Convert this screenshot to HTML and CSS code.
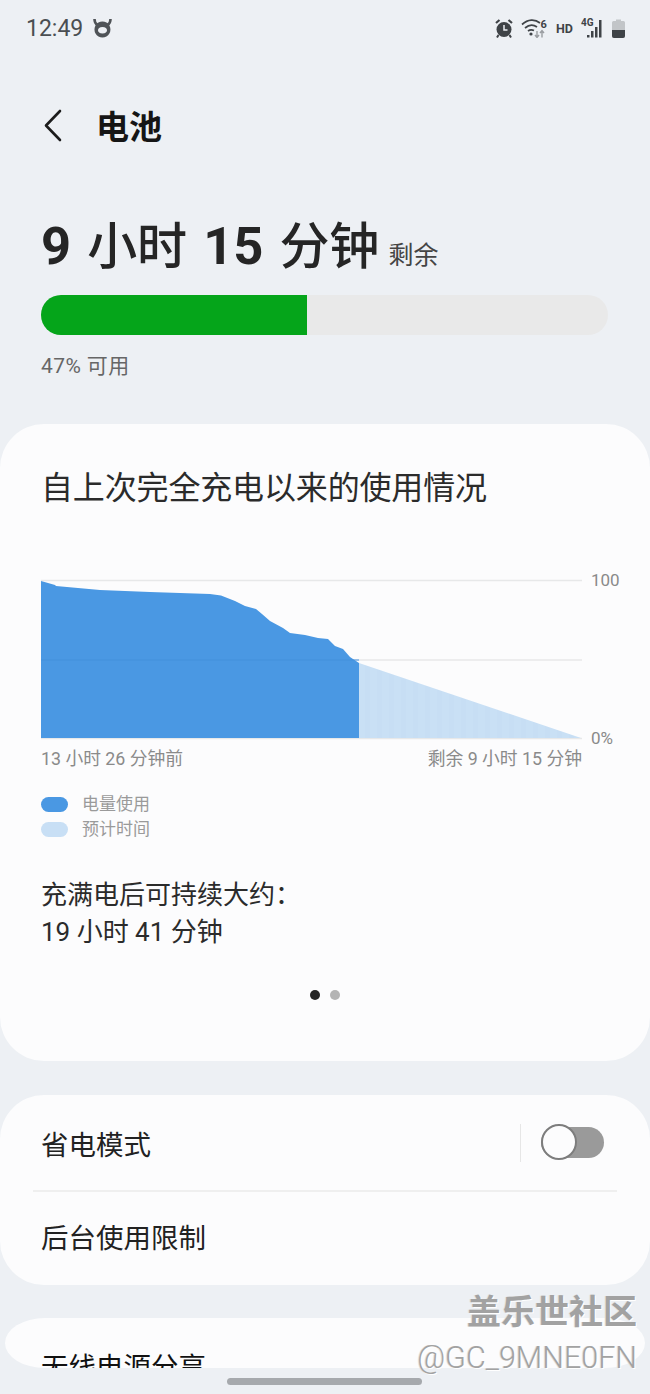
FILE: index.html
```html
<!DOCTYPE html>
<html lang="zh-CN">
<head>
    <meta charset="UTF-8">
    <meta name="viewport" content="width=device-width, initial-scale=1.0">
    <title>电池</title>
    <link rel="stylesheet" href="styles.css">
</head>
<body>
    <div class="screen">
        <div class="status">
            <span class="time">12:49</span>
            <svg class="cow" width="19" height="20" viewBox="0 0 19 20">
                <path fill-rule="evenodd" d="M9.5 3.5 A8 8 0 1 1 9.4 3.5 Z M9.5 9 C6.5 9 5 10.5 5 12.2 C5 14 6.5 15.5 9.5 15.5 C12.5 15.5 14 14 14 12.2 C14 10.5 12.5 9 9.5 9 Z" fill="#4f5357"/>
                <path d="M1.5 1 C1.5 4 2.5 6 4.5 7 M17.5 1 C17.5 4 16.5 6 14.5 7" stroke="#4f5357" stroke-width="2.6" fill="none"/>
            </svg>
            <div class="status_right">
                <svg width="18" height="19" viewBox="0 0 18 19">
                    <circle cx="9" cy="10.5" r="7.5" fill="#3f4347"/>
                    <path d="M9 6 V11 H12.5" stroke="#edf0f4" stroke-width="1.5" fill="none"/>
                    <path d="M1 4 L4.5 1 M17 4 L13.5 1" stroke="#3f4347" stroke-width="2.2"/>
                    <path d="M3.5 16 L2 18.5 M14.5 16 L16 18.5" stroke="#3f4347" stroke-width="2"/>
                </svg>
                <svg width="27" height="20" viewBox="0 0 27 20">
                    <path d="M1 6.5 C7 1 14 1 19 5 M4 10 C8 6.5 12.5 6.5 16 9 M7 13 C9 11.5 11 11.5 13 12.5" stroke="#3f4347" stroke-width="1.7" fill="none"/>
                    <circle cx="10" cy="16" r="1.6" fill="#3f4347"/>
                    <path d="M16 13 V19 M14 17 L16 19.5 L18 17" stroke="#9a9da1" stroke-width="1.4" fill="none"/>
                    <path d="M21 19.5 V13 M19 15 L21 12.5 L23 15" stroke="#9a9da1" stroke-width="1.4" fill="none"/>
                    <text x="19.5" y="9.5" class="wifi_six">6</text>
                </svg>
                <span class="hd">HD</span>
                <div class="signal">
                    <span class="four_g">4G</span>
                    <svg width="23" height="20" viewBox="0 0 23 20">
                        <rect x="6" y="17" width="2.5" height="2.5" fill="#3f4347"/>
                        <rect x="10" y="13" width="2.5" height="6.5" fill="#3f4347"/>
                        <rect x="14" y="9" width="2.5" height="10.5" fill="#3f4347"/>
                        <rect x="18" y="2" width="2.5" height="17.5" fill="#3f4347"/>
                    </svg>
                </div>
                <svg width="13" height="19" viewBox="0 0 13 19">
                    <path d="M4 0.5 H9 V2 H11.5 Q13 2 13 3.5 V17 Q13 19 11 19 H2 Q0 19 0 17 V3.5 Q0 2 1.5 2 H4 Z" fill="#c2c5c8"/>
                    <path d="M0 11 H13 V17 Q13 19 11 19 H2 Q0 19 0 17 Z" fill="#3f4347"/>
                </svg>
            </div>
        </div>

        <div class="header">
            <svg class="back" width="20" height="33" viewBox="0 0 20 33">
                <path d="M17 2 L3 16.5 L17 31" stroke="#1c1c1c" stroke-width="2.6" fill="none" stroke-linecap="round" stroke-linejoin="round"/>
            </svg>
            <h1>电池</h1>
        </div>

        <div class="summary">
            <div class="remain">
                <b>9</b> 小时 <b>15</b> 分钟<small>剩余</small>
            </div>
            <div class="level"><div class="level_fill" style="width:47%"></div></div>
            <p class="avail">47% 可用</p>
        </div>

        <div class="card usage">
            <h2>自上次完全充电以来的使用情况</h2>
            <div class="chart">
                <svg class="chart_svg" width="541" height="162" viewBox="0 0 541 162">
                    <defs>
                        <pattern id="stripes" width="12" height="10" patternUnits="userSpaceOnUse">
                            <rect width="12" height="10" fill="#c9e0f5"/>
                            <rect width="5" height="10" fill="#c7def4"/>
                        </pattern>
                    </defs>
                    <path d="M0 2.5 H541 M0 82 H541 M0 160.5 H541" stroke="#e7e8e9" stroke-width="1.6" fill="none"/>
                    <path d="M318 85 L540 160 H318 Z" fill="url(#stripes)"/>
                    <path d="M0 3 L14 7 L15 8 L59 12 L109 14 L169 16 L180 17.5 L194 23 L204 28 L215 31 L221 36 L229 43 L242 50 L249 55 L264 57 L277 60 L287 61 L294 68 L302 71 L309 79 L318 85 V160 H0 Z" fill="#4a98e3"/>
                    <path d="M0 82 H318" stroke="#4390dc" stroke-width="1.2"/>
                </svg>
                <div class="axis">
                    <span>100</span>
                    <span>0%</span>
                </div>
            </div>
            <div class="chart_times">
                <span>13 小时 26 分钟前</span>
                <span>剩余 9 小时 15 分钟</span>
            </div>
            <ul class="legend">
                <li><i class="swatch"></i>电量使用</li>
                <li><i class="swatch swatch_light"></i>预计时间</li>
            </ul>
            <p class="full">充满电后可持续大约：<br>19 小时 41 分钟</p>
            <div class="dots">
                <span class="on"></span>
                <span></span>
            </div>
        </div>

        <div class="card options">
            <div class="row">
                <span>省电模式</span>
                <div class="row_switch">
                    <div class="switch"><span class="knob"></span></div>
                </div>
            </div>
            <div class="row">
                <span>后台使用限制</span>
            </div>
        </div>

        <div class="card wireless">
            <span>无线电源分享</span>
        </div>

        <div class="watermark">
            <div class="wm_big">盖乐世社区</div>
            <div class="wm_small">@GC_9MNE0FN</div>
        </div>
        <div class="home_bar"></div>
    </div>
</body>
</html>
```

FILE: styles.css
```css
* {
    margin: 0;
    padding: 0;
    box-sizing: border-box;
}
html, body {
    height: 1394px;
    overflow: hidden;
    background: #edf0f4;
}
body {
    font-family: Roboto, "Noto Sans CJK SC", sans-serif;
    color: #252525;
}
.screen {
    position: relative;
    width: 650px;
    height: 1394px;
    overflow: hidden;
}

/* status bar */
.status {
    display: flex;
    align-items: center;
    height: 56px;
    padding: 0 25px 0 26px;
}
.time {
    font-size: 23px;
    color: #4a4e52;
}
.cow {
    margin-left: 10px;
}
.status_right {
    display: flex;
    align-items: center;
    gap: 8px;
    margin-left: auto;
}
.wifi_six {
    font: bold 11px Roboto, sans-serif;
    fill: #3f4347;
}
.hd {
    font-size: 12.5px;
    font-weight: 700;
    color: #3f4347;
}
.signal {
    position: relative;
    width: 23px;
    height: 20px;
}
.four_g {
    position: absolute;
    left: 0;
    top: -1px;
    font-size: 10px;
    font-weight: 700;
    color: #3f4347;
}

/* header */
.header {
    display: flex;
    align-items: center;
    height: 40px;
    margin-top: 49px;
    padding-left: 43px;
}
.header h1 {
    margin-left: 33px;
    font-size: 33px;
    font-weight: 700;
    color: #151515;
}

/* remaining time */
.summary {
    padding: 0 41px;
    margin-top: 66px;
}
.remain {
    display: flex;
    align-items: baseline;
    gap: 16px;
    height: 70px;
    line-height: 70px;
    font-size: 50px;
    font-weight: 500;
    white-space: nowrap;
}
.remain b {
    font-size: 52.5px;
    font-weight: 700;
}
.remain small {
    margin-left: -7px;
    font-size: 25px;
    font-weight: 400;
    color: #444;
}
.level {
    width: 567px;
    height: 40px;
    margin-top: 14px;
    border-radius: 20px;
    background: #e9e9e9;
    overflow: hidden;
}
.level_fill {
    height: 100%;
    background: #05a51a;
}
.avail {
    margin-top: 17px;
    font-size: 21px;
    letter-spacing: 0.4px;
    line-height: 28px;
    color: #666;
}

/* cards */
.card {
    background: #fcfcfd;
    border-radius: 44px;
}
.usage {
    height: 637px;
    margin-top: 44px;
    padding: 42px 41px 0;
}
.usage h2 {
    font-size: 32px;
    font-weight: 400;
    letter-spacing: -0.15px;
    line-height: 44px;
    color: #2b2b2b;
}
.chart {
    display: flex;
    margin-top: 68px;
}
.chart_svg {
    flex: none;
}
.axis {
    display: flex;
    flex-direction: column;
    justify-content: space-between;
    height: 180px;
    margin: -9px 0 -9px 9px;
    font-size: 17px;
    line-height: 22px;
    color: #8a8a8a;
}
.chart_times {
    display: flex;
    justify-content: space-between;
    width: 541px;
    margin-top: 7px;
    font-size: 17.8px;
    line-height: 24px;
    color: #8a8a8a;
}
.legend {
    margin-top: 21px;
    list-style: none;
    font-size: 17px;
    line-height: 25px;
    color: #9a9a9a;
}
.legend li {
    display: flex;
    align-items: center;
    gap: 14px;
}
.swatch {
    width: 27px;
    height: 15px;
    border-radius: 8px;
    background: #4a98e3;
}
.swatch_light {
    background: #c8dff5;
}
.full {
    margin-top: 35px;
    font-size: 26px;
    line-height: 37px;
    color: #2b2b2b;
}
.dots {
    display: flex;
    justify-content: center;
    gap: 10px;
    margin-top: 39px;
}
.dots span {
    width: 10px;
    height: 10px;
    border-radius: 50%;
    background: #b4b4b4;
}
.dots .on {
    background: #252525;
}

.options {
    height: 190px;
    margin-top: 34px;
    padding: 0 33px;
}
.row {
    display: flex;
    align-items: center;
    height: 95px;
    padding: 0 8px;
    font-size: 27.5px;
    color: #222;
}
.row + .row {
    padding-bottom: 5px;
    border-top: 2px solid #efefef;
}
.row_switch {
    display: flex;
    align-items: center;
    height: 38px;
    margin: 0 5px 0 auto;
    padding-left: 20px;
    border-left: 1px solid #e6e6e6;
}
.switch {
    position: relative;
    width: 63px;
    height: 31px;
    border-radius: 16px;
    background: #9a9a9a;
}
.knob {
    position: absolute;
    left: 0;
    top: -3px;
    width: 36px;
    height: 36px;
    border: 2px solid #7d7d7d;
    border-radius: 50%;
    background: #fcfcfd;
}

.wireless {
    height: 50px;
    margin: 33px 5px 0;
    padding: 30px 36px 0;
    border-radius: 40px / 25px;
    overflow: hidden;
    font-size: 27.5px;
    line-height: 40px;
    color: #111;
}

/* over the content */
.watermark {
    position: absolute;
    right: 13px;
    top: 1290px;
    text-align: right;
    color: #a2a2a2;
    text-shadow: 1px 1px 0 #fff, -1px 0 0 #e0e0e0;
}
.wm_big {
    font-size: 34px;
    line-height: 44px;
    font-weight: 700;
}
.wm_small {
    margin-top: 4px;
    font-size: 30.5px;
    font-weight: 300;
    line-height: 40px;
}
.home_bar {
    position: absolute;
    left: 227px;
    top: 1378px;
    width: 195px;
    height: 7px;
    border-radius: 4px;
    background: #a6a9ad;
}
```
